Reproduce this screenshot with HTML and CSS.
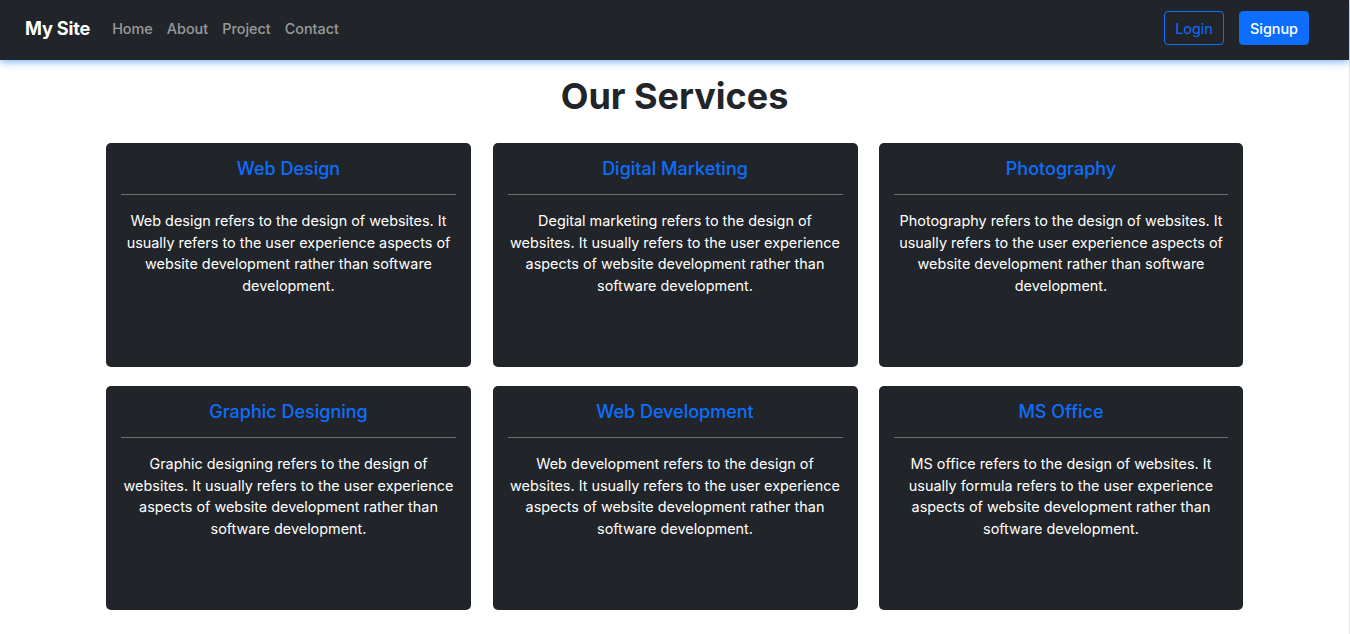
FILE: index.html
```html
<!DOCTYPE html>
<html lang="en">
<head>
<meta charset="utf-8">
<title>My Site</title>
<link rel="stylesheet" href="styles.css">
</head>
<body>
<div class="page">
  <nav class="navbar">
    <div class="nav-left">
      <a class="brand" href="#">My Site</a>
      <ul class="nav-links">
        <li><a href="#">Home</a></li>
        <li><a href="#">About</a></li>
        <li><a href="#">Project</a></li>
        <li><a href="#">Contact</a></li>
      </ul>
    </div>
    <div class="nav-right">
      <button class="btn btn-outline">Login</button>
      <button class="btn btn-primary">Signup</button>
    </div>
  </nav>
  <main class="container">
    <h1 class="title">Our Services</h1>
    <div class="grid">
      <div class="card">
        <h3 class="card-title">Web Design</h3>
        <hr class="card-rule">
        <p class="card-text">Web design refers to the design of websites. It usually refers to the user experience aspects of website development rather than software development.</p>
      </div>
      <div class="card">
        <h3 class="card-title">Digital Marketing</h3>
        <hr class="card-rule">
        <p class="card-text">Degital marketing refers to the design of websites. It usually refers to the user experience aspects of website development rather than software development.</p>
      </div>
      <div class="card">
        <h3 class="card-title">Photography</h3>
        <hr class="card-rule">
        <p class="card-text">Photography refers to the design of websites. It usually refers to the user experience aspects of website development rather than software development.</p>
      </div>
      <div class="card">
        <h3 class="card-title">Graphic Designing</h3>
        <hr class="card-rule">
        <p class="card-text">Graphic designing refers to the design of websites. It usually refers to the user experience aspects of website development rather than software development.</p>
      </div>
      <div class="card">
        <h3 class="card-title">Web Development</h3>
        <hr class="card-rule">
        <p class="card-text">Web development refers to the design of websites. It usually refers to the user experience aspects of website development rather than software development.</p>
      </div>
      <div class="card">
        <h3 class="card-title">MS Office</h3>
        <hr class="card-rule">
        <p class="card-text">MS office refers to the design of websites. It usually formula refers to the user experience aspects of website development rather than software development.</p>
      </div>
    </div>
  </main>
</div>
</body>
</html>
```
FILE: styles.css
```css
* { box-sizing: border-box; }
html, body { margin: 0; padding: 0; }
body {
  font-family: Inter, "Liberation Sans", sans-serif;
  color: #212529;
  background: #fff;
  overflow: hidden;
}
.page {
  min-height: 634px;
  border-right: 1px solid #e3e3e3;
}
.navbar {
  height: 60px;
  background: #212529;
  display: flex;
  align-items: flex-start;
  justify-content: space-between;
  padding: 11px 40px 0 25px;
  box-shadow: 0 2px 8px rgba(60, 150, 240, 0.7);
  position: relative;
}
.nav-left { display: flex; align-items: center; height: 34px; }
.brand {
  color: #fff;
  font-weight: 700;
  font-size: 18.2px;
  text-decoration: none;
  margin-right: 22px;
  letter-spacing: -0.2px;
}
.nav-links {
  list-style: none;
  display: flex;
  gap: 14px;
  margin: 0;
  padding: 0;
}
.nav-links a {
  color: rgba(255, 255, 255, 0.55);
  text-decoration: none;
  font-size: 14.4px;
  font-weight: 500;
}
.nav-right { display: flex; gap: 15px; }
.btn {
  font-family: inherit;
  font-size: 14.4px;
  height: 34px;
  border-radius: 4px;
  padding: 0;
  cursor: pointer;
}
.btn-outline {
  background: transparent;
  color: #0d6efd;
  border: 1px solid #0d6efd;
  width: 60px;
}
.btn-primary {
  background: #0d6efd;
  color: #fff;
  border: 1px solid #0d6efd;
  font-weight: 500;
  width: 70px;
}
.container {
  width: 1137px;
  margin: 0 auto;
}
.title {
  text-align: center;
  font-size: 36px;
  font-weight: 700;
  margin: 15px 0 0;
  line-height: 43px;
  letter-spacing: 0;
}
.grid {
  display: grid;
  grid-template-columns: 365px 365px 364px;
  column-gap: 21.5px;
  row-gap: 19px;
  margin-top: 25px;
}
.card {
  background: #212529;
  border-radius: 5px;
  height: 224px;
  padding: 14px 15px;
  text-align: center;
}
.card-title {
  color: #0d6efd;
  font-size: 18px;
  font-weight: 500;
  margin: 0;
  line-height: 24px;
}
.card-rule {
  border: 0;
  border-top: 1px solid #6c6e70;
  margin: 13px 0 15px;
}
.card-text {
  color: #fff;
  font-size: 14.4px;
  line-height: 21.7px;
  margin: 0;
}
```
